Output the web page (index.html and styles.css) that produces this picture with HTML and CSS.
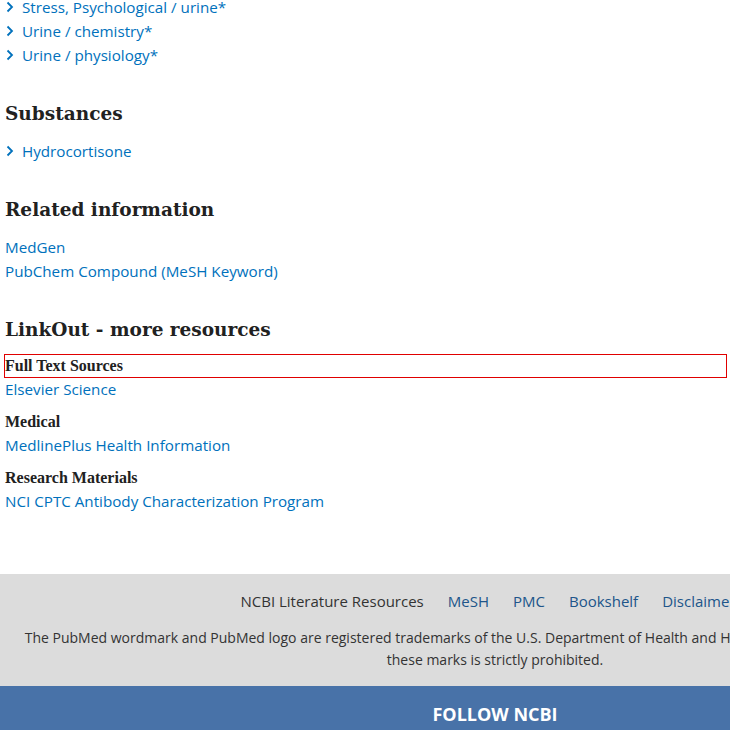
FILE: index.html
```html
<!DOCTYPE html>
<html>
<head>
<meta charset="utf-8">
<link rel="stylesheet" href="styles.css">
</head>
<body>
<main class="content">
  <ul class="term-list">
    <li><svg class="chev" viewBox="0 0 8 12"><polyline points="1.5,1.5 6,6 1.5,10.5"/></svg><a href="#">Stress, Psychological / urine*</a></li>
    <li><svg class="chev" viewBox="0 0 8 12"><polyline points="1.5,1.5 6,6 1.5,10.5"/></svg><a href="#">Urine / chemistry*</a></li>
    <li><svg class="chev" viewBox="0 0 8 12"><polyline points="1.5,1.5 6,6 1.5,10.5"/></svg><a href="#">Urine / physiology*</a></li>
  </ul>

  <section class="sec">
    <h2 class="sec-title">Substances</h2>
    <ul class="term-list">
      <li><svg class="chev" viewBox="0 0 8 12"><polyline points="1.5,1.5 6,6 1.5,10.5"/></svg><a href="#">Hydrocortisone</a></li>
    </ul>
  </section>

  <section class="sec">
    <h2 class="sec-title">Related information</h2>
    <ul class="plain-list">
      <li><a href="#">MedGen</a></li>
      <li><a href="#">PubChem Compound (MeSH Keyword)</a></li>
    </ul>
  </section>

  <section class="sec">
    <h2 class="sec-title">LinkOut - more resources</h2>
    <div class="linkout">
      <h3 class="sub-title outlined">Full Text Sources</h3>
      <ul class="plain-list"><li><a href="#">Elsevier Science</a></li></ul>
      <h3 class="sub-title">Medical</h3>
      <ul class="plain-list"><li><a href="#">MedlinePlus Health Information</a></li></ul>
      <h3 class="sub-title">Research Materials</h3>
      <ul class="plain-list"><li><a href="#">NCI CPTC Antibody Characterization Program</a></li></ul>
    </div>
  </section>
</main>

<footer class="footer">
  <div class="footer-inner">
    <nav class="footer-nav">
      <span class="footer-label">NCBI Literature Resources</span>
      <a href="#">MeSH</a>
      <a href="#">PMC</a>
      <a href="#">Bookshelf</a>
      <a href="#">Disclaimer</a>
    </nav>
    <p class="trademark">The PubMed wordmark and PubMed logo are registered trademarks of the U.S. Department of Health and Human Services. Unauthorized use of<br>these marks is strictly prohibited.</p>
  </div>
  <div class="follow">
    <div class="follow-inner">FOLLOW NCBI</div>
  </div>
</footer>
</body>
</html>
```

FILE: styles.css
```css
html, body {
  margin: 0;
  padding: 0;
  background: #fff;
}
body {
  font-family: "Open Sans", "Noto Sans", sans-serif;
  font-size: 15.2px;
  color: #212121;
  overflow: hidden;
}
a {
  color: #0071bc;
  text-decoration: none;
}
.content {
  margin-top: -5px;
  padding: 0 4px 0 5px;
}
ul {
  list-style: none;
  margin: 0;
  padding: 0;
}
.term-list li,
.plain-list li {
  line-height: 24px;
  display: flex;
  align-items: center;
}
.chev {
  width: 8px;
  height: 12px;
  margin: 0 8px 0 1px;
  fill: none;
  stroke: #0071bc;
  stroke-width: 1.8;
}
.sec {
  margin-top: 33px;
}
.sec-title {
  font-family: "DejaVu Serif", serif;
  font-size: 18.5px;
  font-weight: bold;
  color: #212121;
  margin: 0 0 11px 0;
  line-height: 28px;
}
.sub-title {
  font-family: "Liberation Serif", serif;
  font-size: 16px;
  font-weight: bold;
  margin: 0;
  line-height: 22px;
  color: #212121;
}
.linkout .sub-title {
  margin-top: 10px;
}
.linkout .sub-title.outlined {
  margin-top: 0;
  outline: 1px solid #e00000;
}
.footer {
  margin-top: 61px;
  overflow: hidden;
  width: 730px;
}
.footer-inner {
  width: 990px;
  background: #dcdcdc;
  padding: 15px 0 15px;
}
.footer-nav {
  display: flex;
  justify-content: center;
  gap: 24px;
  padding-right: 14px;
  font-size: 15px;
  line-height: 24px;
}
.footer-label {
  color: #333;
}
.footer-nav a {
  color: #20558a;
}
.trademark {
  margin: 14px 0 0;
  padding: 0 10px;
  text-align: center;
  font-size: 14px;
  line-height: 22px;
  color: #333;
}
.follow {
  width: 990px;
  background: #4872a8;
  height: 60px;
}
.follow-inner {
  text-align: center;
  color: #fff;
  font-weight: bold;
  font-size: 18px;
  line-height: 56px;
}
```
